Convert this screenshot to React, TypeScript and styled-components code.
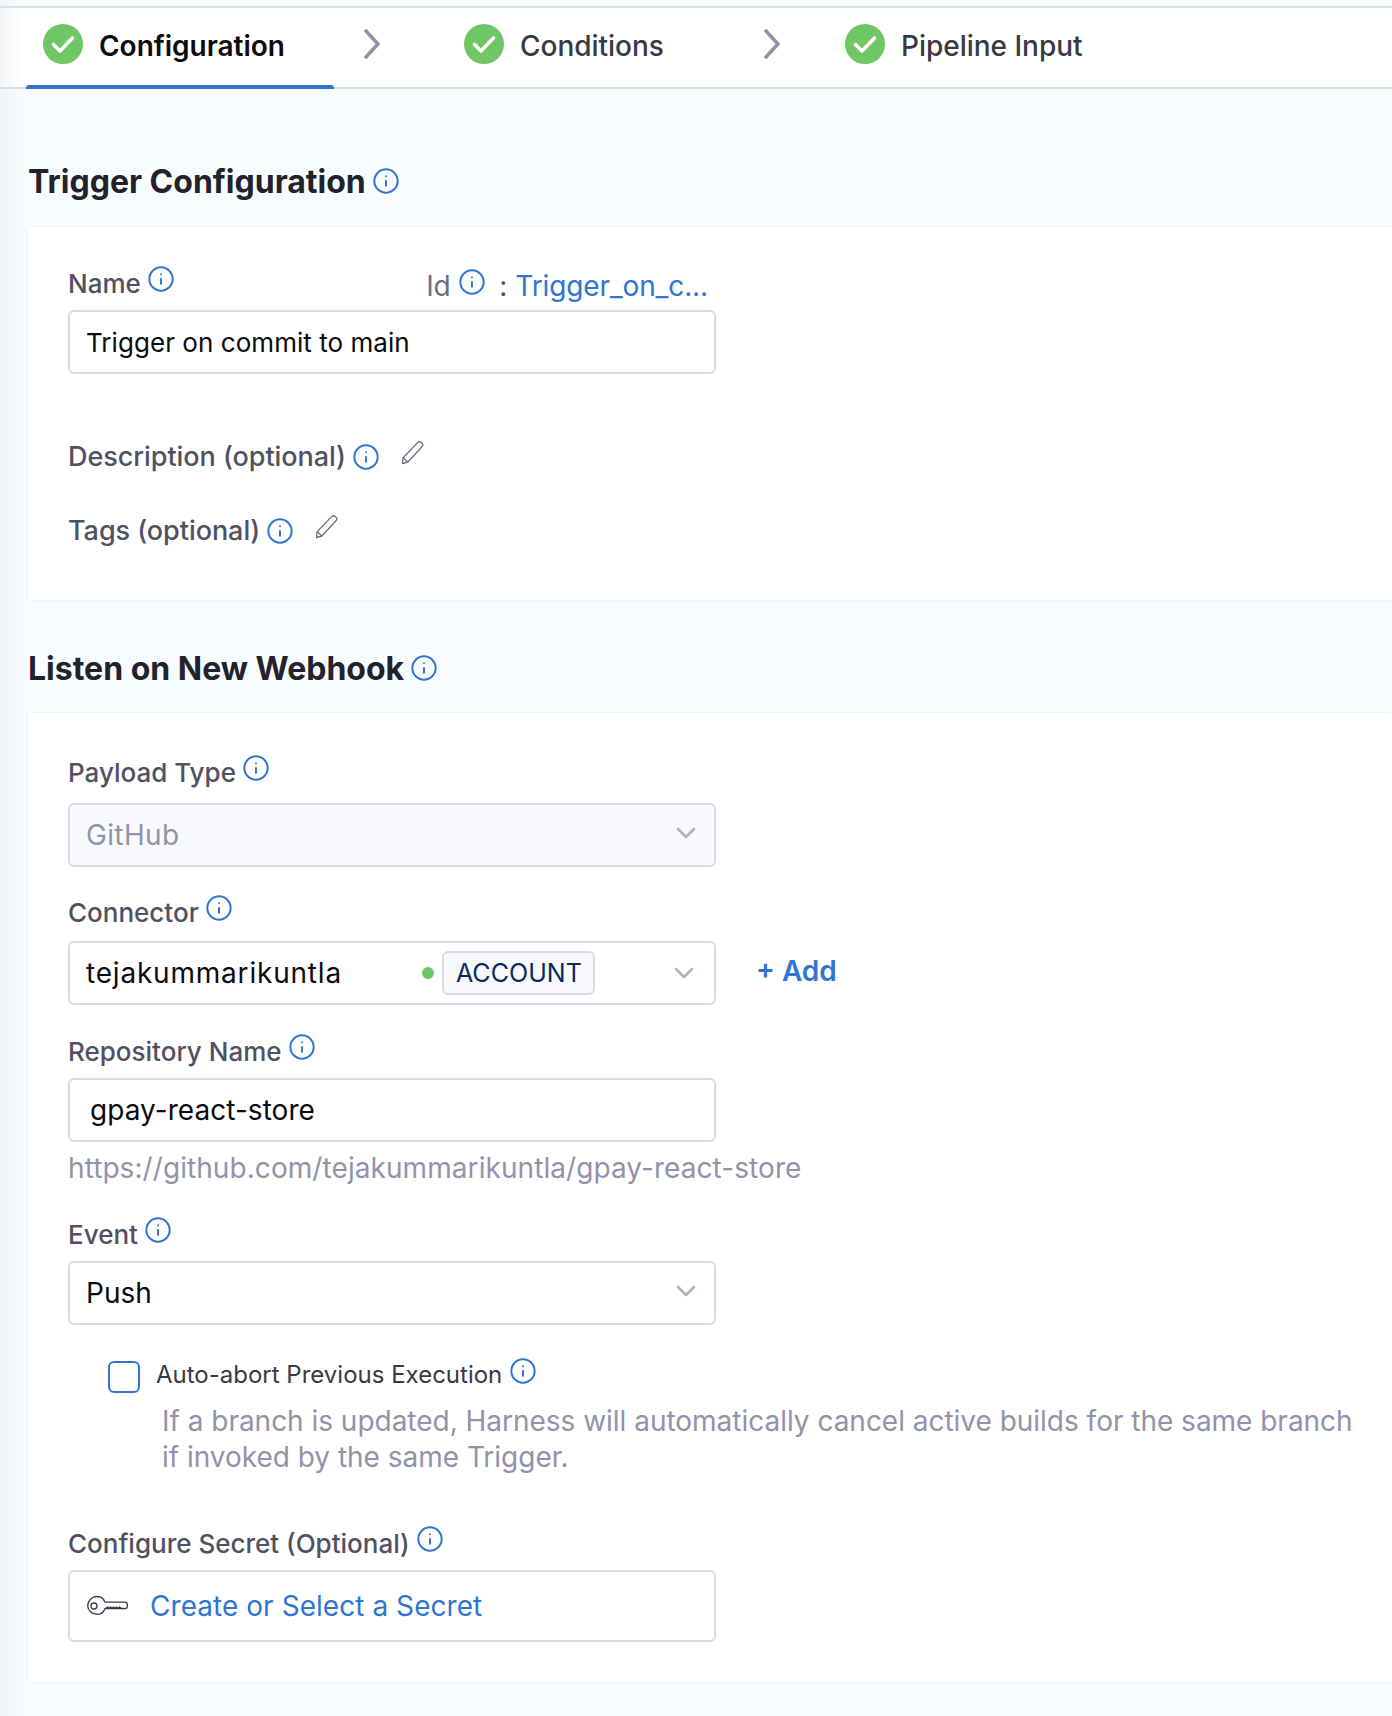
import React from 'react';
import styled, { createGlobalStyle } from 'styled-components';
import { ChevronDown, Info } from 'lucide-react';

const GlobalStyle = createGlobalStyle`
    html, body {
        margin: 0;
        padding: 0;
        background: #f9fcff;
        font-family: Inter, "Noto Sans", sans-serif;
        overflow-x: hidden;
    }
    * {
        box-sizing: border-box;
    }
`;

const Page = styled.div`
    width: 1392px;
    height: 1716px;
    overflow: hidden;
    padding-top: 6px;
    background: linear-gradient(90deg, #f1f4f8 0, #f9fcff 24px);
`;

const TabBar = styled.div`
    display: flex;
    align-items: stretch;
    height: 83px;
    padding-left: 26px;
    background: linear-gradient(90deg, #f6f6f6 0, #ffffff 22px);
    border-top: 2px solid #dfdfe3;
    border-bottom: 2px solid #dcdde1;
`;

const Tab = styled.div<{ $active?: boolean; $width: number }>`
    position: relative;
    display: flex;
    align-items: center;
    gap: 16px;
    width: ${(p) => p.$width}px;
    padding-left: 17px;
    padding-bottom: 3px;
    font-size: 28px;
    letter-spacing: -0.02px;
    font-weight: ${(p) => (p.$active ? 600 : 500)};
    color: ${(p) => (p.$active ? '#0b0b0d' : '#383946')};

    &::after {
        content: '';
        display: ${(p) => (p.$active ? 'block' : 'none')};
        position: absolute;
        left: 0;
        right: 0;
        bottom: -2px;
        height: 4px;
        background: #2f74cf;
        border-radius: 3px 3px 0 0;
    }
`;

const TabArrow = styled.div<{ $width: number }>`
    display: flex;
    align-items: center;
    width: ${(p) => p.$width}px;
    padding-left: 29px;
    padding-bottom: 8px;
`;

const StepCircle = styled.svg`
    margin-bottom: 5px;
`;

const SectionHead = styled.h2<{ $top: number }>`
    display: flex;
    align-items: center;
    gap: 6px;
    margin: ${(p) => p.$top}px 0 0 28px;
    height: 40px;
    font-size: 32px;
    font-weight: 700;
    color: #22222a;
`;

const Card = styled.section<{ $height: number; $top: number }>`
    height: ${(p) => p.$height}px;
    margin: ${(p) => p.$top}px 0 0 28px;
    padding: 34px 0 0 40px;
    background: #ffffff;
    box-shadow: 0 0 2px rgba(40, 41, 61, 0.1);
`;

const LabelRow = styled.div<{ $top?: number; $wide?: boolean }>`
    display: flex;
    align-items: center;
    gap: 6px;
    height: 32px;
    margin-top: ${(p) => p.$top ?? 0}px;
    font-size: ${(p) => (p.$wide ? 27 : 26)}px;
    letter-spacing: ${(p) => (p.$wide ? -0.05 : 0)}px;
    font-weight: 500;
    color: #4f5162;
`;

const InfoUp = styled.span`
    display: inline-flex;
    color: #3075d1;
    margin-top: -8px;
`;

const InfoDown = styled(InfoUp)`
    margin-top: 2px;
`;

const InfoLevel = styled(InfoUp)`
    margin-top: 0;
`;

const PencilWrap = styled.span`
    display: inline-flex;
    margin: -6px 0 0 15px;
`;

const NameRow = styled.div`
    display: flex;
    align-items: flex-start;
    width: 648px;
    height: 37px;
`;

const IdBlock = styled.div`
    display: flex;
    align-items: center;
    margin: 9px 8px 0 auto;
    height: 32px;
    font-size: 28px;
    letter-spacing: -0.12px;
    font-weight: 400;
    color: #6b6d85;
    white-space: nowrap;
`;

const IdValue = styled.span`
    color: #3075d1;
`;

const IdColon = styled.span`
    color: #4f5162;
    margin: 0 8px 0 13px;
`;

const Field = styled.div<{ $top?: number; $muted?: boolean; $small?: boolean }>`
    display: flex;
    align-items: center;
    width: 648px;
    height: 64px;
    margin-top: ${(p) => p.$top ?? 7}px;
    padding: 0 10px 0 16px;
    background: ${(p) => (p.$muted ? '#f8f9fd' : '#ffffff')};
    border: 2px solid #d9dae5;
    border-radius: 6px;
    font-size: ${(p) => (p.$small ? 26 : 28)}px;
    letter-spacing: ${(p) => (p.$muted ? 0.35 : 0.05)}px;
    color: ${(p) => (p.$muted ? '#9293ab' : '#0b0b0d')};
    white-space: nowrap;
`;

const Caret = styled(ChevronDown)<{ $raised?: boolean }>`
    margin-left: auto;
    margin-right: ${(p) => (p.$raised ? 2 : 4)}px;
    margin-top: ${(p) => (p.$raised ? -4 : 0)}px;
    color: #b0b1c3;
`;

const ConnectorRow = styled.div`
    display: flex;
    align-items: center;
`;

const ConnectorName = styled.span`
    letter-spacing: 0.8px;
`;

const StatusDot = styled.span`
    width: 12px;
    height: 12px;
    margin-left: 80px;
    border-radius: 50%;
    background: #6fc664;
`;

const ScopeTag = styled.span`
    display: flex;
    align-items: center;
    width: 153px;
    height: 44px;
    margin-left: 8px;
    padding-left: 12px;
    background: #f8f9fd;
    border: 2px solid #d9dae5;
    border-radius: 6px;
    font-size: 25px;
    color: #0a2a5e;
`;

const AddLink = styled.span`
    margin: 9px 0 0 40px;
    font-size: 28px;
    font-weight: 600;
    color: #3075d1;
`;

const RepoValue = styled.span`
    padding-left: 4px;
`;

const UrlHint = styled.div`
    margin-top: 8px;
    height: 36px;
    line-height: 36px;
    font-size: 28px;
    letter-spacing: 0.07px;
    color: #9293ab;
    white-space: nowrap;
`;

const CheckRow = styled.div`
    display: flex;
    margin: 36px 0 0 40px;
`;

const CheckBox = styled.span`
    flex: none;
    width: 32px;
    height: 32px;
    border: 2px solid #3075d1;
    border-radius: 6px;
`;

const CheckTitle = styled.div`
    display: flex;
    align-items: center;
    gap: 7px;
    margin-left: 16px;
    height: 27px;
    font-size: 24px;
    color: #383946;
`;

const CheckHint = styled.p`
    width: 1200px;
    margin: 15px 0 0 22px;
    font-size: 28px;
    letter-spacing: -0.02px;
    line-height: 36px;
    color: #9293ab;
`;

const SecretField = styled(Field)`
    height: 72px;
    gap: 22px;
    border-color: #dcdcdf;
    color: #3075d1;
`;

const StepCheck = () => (
    <StepCircle width="40" height="40" viewBox="0 0 40 40">
        <circle cx="20" cy="20" r="20" fill="#6fc664" />
        <path d="M10.5 20.5l6.5 6.5 12.5-13" fill="none" stroke="#fff" strokeWidth="3.6" strokeLinecap="round" strokeLinejoin="round" />
    </StepCircle>
);

const StepArrow = () => (
    <svg width="18" height="30" viewBox="0 0 18 30" fill="none" stroke="#9293ab" strokeWidth="3.6" strokeLinecap="round" strokeLinejoin="round">
        <path d="M3 2l12 13L3 28" />
    </svg>
);

const Hint = () => <Info size={28} strokeWidth={1.7} />;

const PencilIcon = () => (
    <svg width="24" height="24" viewBox="0 0 24 24" fill="none" stroke="#6b6d85" strokeWidth="1.3" strokeLinejoin="round">
        <path d="M1.5 22.5l.6-5.8L16.6 1.6c1-1 2.6-1 3.6-.1l.8.8c1 1 1 2.5 0 3.5L6.9 21z" />
        <path d="M2.1 16.7l4.8 4.3" />
    </svg>
);

const KeyIcon = () => (
    <svg width="42" height="22" viewBox="0 0 42 22" fill="none" stroke="#383946" strokeWidth="1.3" strokeLinejoin="round">
        <path d="M11 1.5c3.7 0 6.8 2.3 8 5.6h20c1.4 0 2.3 1 2.3 2.4v2.2c0 1-.8 1.8-1.8 1.8H19c-1.2 3.4-4.3 5.9-8 5.9-5 0-9.3-4-9.3-8.9S6 1.5 11 1.5z" />
        <circle cx="8" cy="11" r="3" />
        <path d="M20 13.4l1.5-1.4 1.5 1.4 1.5-1.4 1.5 1.4 1.5-1.4 1.5 1.4 1.5-1.4 1.5 1.4 1.5-1.4 1.5 1.4" />
    </svg>
);

const App: React.FC = () => {
    return (
        <Page>
            <GlobalStyle />
            <TabBar>
                <Tab $active $width={308}>
                    <StepCheck />
                    Configuration
                </Tab>
                <TabArrow $width={113}>
                    <StepArrow />
                </TabArrow>
                <Tab $width={287}>
                    <StepCheck />
                    Conditions
                </Tab>
                <TabArrow $width={94}>
                    <StepArrow />
                </TabArrow>
                <Tab $width={340}>
                    <StepCheck />
                    Pipeline Input
                </Tab>
            </TabBar>

            <SectionHead $top={72}>
                Trigger Configuration
                <InfoLevel><Hint /></InfoLevel>
            </SectionHead>
            <Card $top={26} $height={373}>
                <NameRow>
                    <LabelRow $top={6}>
                        Name
                        <InfoUp><Hint /></InfoUp>
                    </LabelRow>
                    <IdBlock>
                        Id&nbsp;
                        <InfoUp><Hint /></InfoUp>
                        <IdColon>:</IdColon>
                        <IdValue>Trigger_on_c...</IdValue>
                    </IdBlock>
                </NameRow>
                <Field $top={12} $small>Trigger on commit to main</Field>
                <LabelRow $top={66} $wide>
                    Description (optional)
                    <InfoDown><Hint /></InfoDown>
                    <PencilWrap><PencilIcon /></PencilWrap>
                </LabelRow>
                <LabelRow $top={42} $wide>
                    Tags (optional)
                    <InfoDown><Hint /></InfoDown>
                    <PencilWrap><PencilIcon /></PencilWrap>
                </LabelRow>
            </Card>

            <SectionHead $top={48}>
                Listen on New Webhook
                <InfoLevel><Hint /></InfoLevel>
            </SectionHead>
            <Card $top={25} $height={969}>
                <LabelRow $top={9}>
                    Payload Type
                    <InfoUp><Hint /></InfoUp>
                </LabelRow>
                <Field $muted $top={15}>
                    GitHub
                    <Caret size={32} strokeWidth={2} $raised />
                </Field>
                <LabelRow $top={29}>
                    Connector
                    <InfoUp><Hint /></InfoUp>
                </LabelRow>
                <ConnectorRow>
                    <Field $top={13}>
                        <ConnectorName>tejakummarikuntla</ConnectorName>
                        <StatusDot />
                        <ScopeTag>ACCOUNT</ScopeTag>
                        <Caret size={32} strokeWidth={2} />
                    </Field>
                    <AddLink>+ Add</AddLink>
                </ConnectorRow>
                <LabelRow $top={30}>
                    Repository Name
                    <InfoUp><Hint /></InfoUp>
                </LabelRow>
                <Field $top={11}>
                    <RepoValue>gpay-react-store</RepoValue>
                </Field>
                <UrlHint>https://github.com/tejakummarikuntla/gpay-react-store</UrlHint>
                <LabelRow $top={32}>
                    Event
                    <InfoUp><Hint /></InfoUp>
                </LabelRow>
                <Field $top={11}>
                    Push
                    <Caret size={32} strokeWidth={2} $raised />
                </Field>
                <CheckRow>
                    <CheckBox />
                    <div>
                        <CheckTitle>
                            Auto-abort Previous Execution
                            <InfoUp><Hint /></InfoUp>
                        </CheckTitle>
                        <CheckHint>
                            If a branch is updated, Harness will automatically cancel active builds for the same branch if invoked by the same Trigger.
                        </CheckHint>
                    </div>
                </CheckRow>
                <LabelRow $top={52}>
                    Configure Secret (Optional)
                    <InfoUp><Hint /></InfoUp>
                </LabelRow>
                <SecretField $top={11}>
                    <KeyIcon />
                    Create or Select a Secret
                </SecretField>
            </Card>
        </Page>
    );
};

export default App;
